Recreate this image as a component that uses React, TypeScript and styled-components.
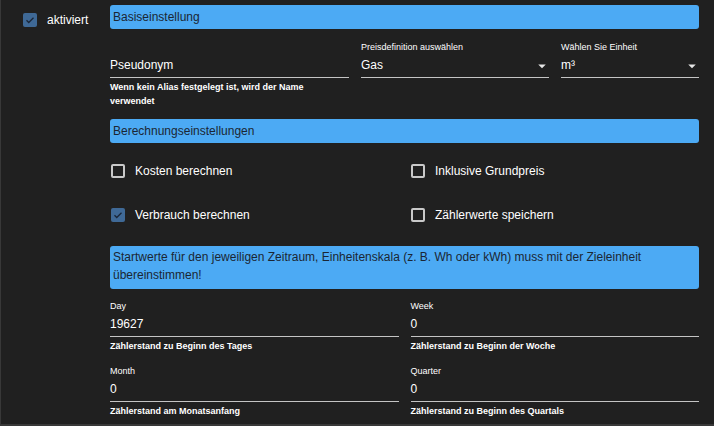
import React from "react";
import styled, { createGlobalStyle } from "styled-components";

const Global = createGlobalStyle`
  html, body { margin: 0; padding: 0; background: #1f1f1f; }
  body { font-family: "Liberation Sans", Arial, sans-serif; color: #fff; }
  * { box-sizing: border-box; }
`;

const Panel = styled.div`
  width: 714px;
  height: 426px;
  background: #202020;
  border-left: 1px solid #383838;
  border-bottom: 2px solid #383838;
  display: flex;
  overflow: hidden;
`;

const LeftCol = styled.div`
  width: 109px;
  padding: 13px 0 0 22px;
`;

const MainCol = styled.div`
  width: 589px;
  display: flex;
  flex-direction: column;
`;

const CheckRow = styled.label`
  display: flex;
  align-items: center;
  gap: 10px;
  height: 14px;
  font-size: 12px;
  color: #fff;
  white-space: nowrap;
`;

const Box = styled.span<{ $checked?: boolean }>`
  width: 14px;
  height: 14px;
  flex: none;
  border-radius: 2px;
  display: flex;
  align-items: center;
  justify-content: center;
  background: ${(p) => (p.$checked ? "#3f6996" : "transparent")};
  border: ${(p) => (p.$checked ? "none" : "2px solid #c9c9c9")};
`;

const SectionBar = styled.div<{ $top: number }>`
  margin-top: ${(p) => p.$top}px;
  height: 24px;
  background: #4caaf4;
  border-radius: 3px;
  color: #1b2633;
  font-size: 12px;
  line-height: 24px;
  padding-left: 3px;
`;

const InfoBox = styled.div`
  margin-top: 9px;
  background: #4caaf4;
  border-radius: 3px;
  color: #1b2633;
  font-size: 12px;
  line-height: 18px;
  padding: 2px 4px 5px 3px;
`;

const FieldGrid = styled.div<{ $cols: string; $top: number; $rowGap?: number }>`
  display: grid;
  grid-template-columns: ${(p) => p.$cols};
  column-gap: 12px;
  row-gap: ${(p) => p.$rowGap ?? 0}px;
  margin-top: ${(p) => p.$top}px;
  align-items: start;
`;

const FieldWrap = styled.div`
  display: flex;
  flex-direction: column;
  min-width: 0;
`;

const Label = styled.div<{ $hidden?: boolean }>`
  font-size: 9px;
  line-height: 11px;
  height: 11px;
  margin-bottom: 4px;
  color: #fff;
  visibility: ${(p) => (p.$hidden ? "hidden" : "visible")};
  white-space: nowrap;
`;

const InputLine = styled.div`
  display: flex;
  align-items: center;
  justify-content: space-between;
  height: 21px;
  padding-bottom: 3px;
  border-bottom: 1px solid #c4c4c4;
  font-size: 12px;
  line-height: 17px;
  color: #fff;
`;

const Helper = styled.div`
  margin-top: 2px;
  font-size: 9px;
  font-weight: bold;
  line-height: 14px;
  color: #fff;
`;

const CheckGrid = styled.div`
  margin-top: 6px;
  display: grid;
  grid-template-columns: 1fr 1fr;
  column-gap: 12px;
  grid-auto-rows: 44px;
  align-items: center;
  padding-left: 1px;
`;

const Arrow = () => (
  <svg width="18" height="18" viewBox="0 0 24 24" style={{ flex: "none", marginRight: -2 }}>
    <path d="M7 10l5 5 5-5z" fill="#e6e6e6" />
  </svg>
);

const CheckIcon = () => (
  <svg width="12" height="12" viewBox="0 0 24 24">
    <path d="M5 12.5l4.5 4.5L19 7.5" fill="none" stroke="#1a2638" strokeWidth="2.6" />
  </svg>
);

const Check: React.FC<{ checked?: boolean; label: string }> = ({ checked, label }) => (
  <CheckRow>
    <Box $checked={checked}>{checked && <CheckIcon />}</Box>
    {label}
  </CheckRow>
);

const Field: React.FC<{ label?: string; value: string; helper?: string; select?: boolean }> = ({
  label,
  value,
  helper,
  select,
}) => (
  <FieldWrap>
    <Label $hidden={!label}>{label || "."}</Label>
    <InputLine>
      <span>{value}</span>
      {select && <Arrow />}
    </InputLine>
    {helper && <Helper>{helper}</Helper>}
  </FieldWrap>
);

export default function App() {
  return (
    <>
      <Global />
      <Panel>
        <LeftCol>
          <Check checked label="aktiviert" />
        </LeftCol>
        <MainCol>
          <SectionBar $top={5}>Basiseinstellung</SectionBar>
          <FieldGrid $cols="239px 188px 1fr" $top={13}>
            <Field value="Pseudonym" helper="Wenn kein Alias festgelegt ist, wird der Name verwendet" />
            <Field label="Preisdefinition auswählen" value="Gas" select />
            <Field label="Wählen Sie Einheit" value="m³" select />
          </FieldGrid>
          <SectionBar $top={11}>Berechnungseinstellungen</SectionBar>
          <CheckGrid>
            <Check label="Kosten berechnen" />
            <Check label="Inklusive Grundpreis" />
            <Check checked label="Verbrauch berechnen" />
            <Check label="Zählerwerte speichern" />
          </CheckGrid>
          <InfoBox>
            Startwerte für den jeweiligen Zeitraum, Einheitenskala (z. B. Wh oder kWh) muss mit der Zieleinheit
            übereinstimmen!
          </InfoBox>
          <FieldGrid $cols="1fr 1fr" $top={12} $rowGap={13}>
            <Field label="Day" value="19627" helper="Zählerstand zu Beginn des Tages" />
            <Field label="Week" value="0" helper="Zählerstand zu Beginn der Woche" />
            <Field label="Month" value="0" helper="Zählerstand am Monatsanfang" />
            <Field label="Quarter" value="0" helper="Zählerstand zu Beginn des Quartals" />
          </FieldGrid>
        </MainCol>
      </Panel>
    </>
  );
}
